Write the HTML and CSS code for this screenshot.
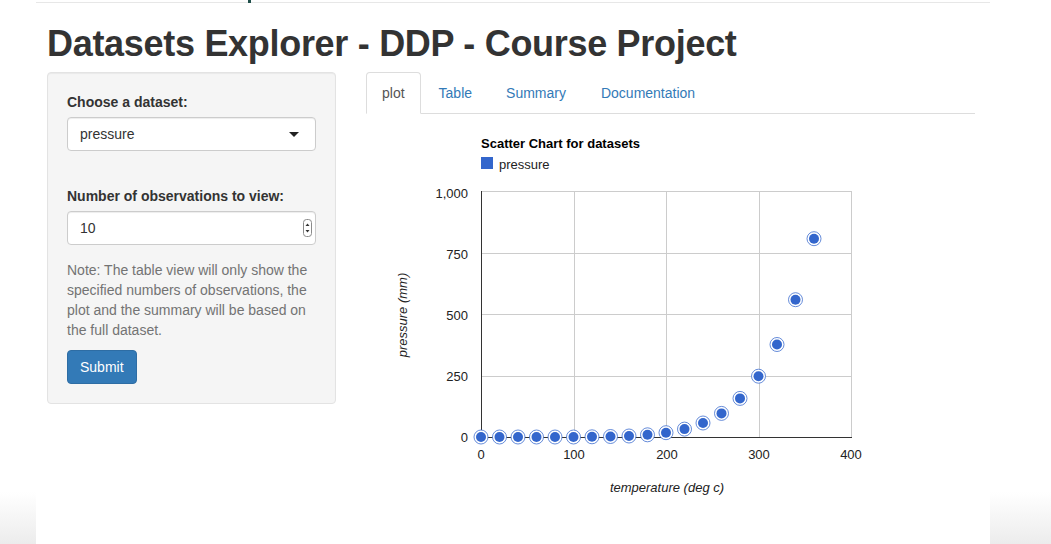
FILE: index.html
```html
<!DOCTYPE html>
<html>
<head>
<meta charset="utf-8">
<title>Datasets Explorer</title>
<link rel="stylesheet" href="styles.css">
</head>
<body>
<div class="page">
  <div class="topbar"><span class="mark"></span></div>
  <h1 class="title">Datasets Explorer - DDP - Course Project</h1>
  <div class="row">
    <aside class="well">
      <div class="group g1">
        <label class="lbl">Choose a dataset:</label>
        <div class="field select"><span>pressure</span><span class="caret"></span></div>
      </div>
      <div class="group g2">
        <label class="lbl">Number of observations to view:</label>
        <div class="field input"><span>10</span>
          <span class="spin"><svg width="9" height="18" viewBox="0 0 9 18"><rect x="0.5" y="0.5" width="8" height="17" rx="3" fill="#fff" stroke="#8a8a8a"/><path d="M2.5 7 L4.5 4.5 L6.5 7 Z" fill="#333"/><path d="M2.5 11 L4.5 13.5 L6.5 11 Z" fill="#333"/></svg></span>
        </div>
      </div>
      <p class="help">Note: The table view will only show the specified numbers of observations, the plot and the summary will be based on the full dataset.</p>
      <button class="btn">Submit</button>
    </aside>
    <main class="main">
      <ul class="tabs">
        <li class="tab active"><a>plot</a></li>
        <li class="tab"><a>Table</a></li>
        <li class="tab"><a>Summary</a></li>
        <li class="tab tab-doc"><a>Documentation</a></li>
      </ul>
      <div class="tab-content">
        <svg class="chart" width="609" height="400" viewBox="366 114 609 400">
          <text class="ctitle" x="481" y="148">Scatter Chart for datasets</text>
          <rect x="481" y="157" width="12" height="12" fill="#3366cc"/>
          <text class="clabel" x="499" y="169">pressure</text>
          <g stroke="#cccccc" stroke-width="1" fill="none">
            <path d="M481 191.5 H851.5"/>
            <path d="M481 253.5 H851.5"/>
            <path d="M481 314.5 H851.5"/>
            <path d="M481 376.5 H851.5"/>
            <path d="M574.5 191 V437"/>
            <path d="M666.5 191 V437"/>
            <path d="M759.5 191 V437"/>
            <path d="M851.5 191 V437"/>
          </g>
          <path d="M481.5 191 V438" stroke="#333" stroke-width="1"/>
          <path d="M481 437.5 H852" stroke="#333" stroke-width="1"/>
          <g class="clabel" text-anchor="end">
            <text x="468" y="198">1,000</text>
            <text x="468" y="259">750</text>
            <text x="468" y="320">500</text>
            <text x="468" y="381">250</text>
            <text x="468" y="442">0</text>
          </g>
          <g class="clabel" text-anchor="middle">
            <text x="481" y="459">0</text>
            <text x="574" y="459">100</text>
            <text x="667" y="459">200</text>
            <text x="759" y="459">300</text>
            <text x="851" y="459">400</text>
          </g>
          <text class="clabel ital" x="667" y="492" text-anchor="middle">temperature (deg c)</text>
          <text class="clabel ital" x="407" y="315" text-anchor="middle" transform="rotate(-90 407 315)">pressure (mm)</text>
          <g class="pts">
            <g transform="translate(481 437)"><circle r="7" class="ring"/><circle r="5" class="dot"/></g>
            <g transform="translate(499.5 437)"><circle r="7" class="ring"/><circle r="5" class="dot"/></g>
            <g transform="translate(518 437)"><circle r="7" class="ring"/><circle r="5" class="dot"/></g>
            <g transform="translate(536.5 437)"><circle r="7" class="ring"/><circle r="5" class="dot"/></g>
            <g transform="translate(555 437)"><circle r="7" class="ring"/><circle r="5" class="dot"/></g>
            <g transform="translate(573.5 437)"><circle r="7" class="ring"/><circle r="5" class="dot"/></g>
            <g transform="translate(592 436.8)"><circle r="7" class="ring"/><circle r="5" class="dot"/></g>
            <g transform="translate(610.5 436.5)"><circle r="7" class="ring"/><circle r="5" class="dot"/></g>
            <g transform="translate(629 436)"><circle r="7" class="ring"/><circle r="5" class="dot"/></g>
            <g transform="translate(647.5 434.8)"><circle r="7" class="ring"/><circle r="5" class="dot"/></g>
            <g transform="translate(666 432.7)"><circle r="7" class="ring"/><circle r="5" class="dot"/></g>
            <g transform="translate(684.5 429.1)"><circle r="7" class="ring"/><circle r="5" class="dot"/></g>
            <g transform="translate(703 423)"><circle r="7" class="ring"/><circle r="5" class="dot"/></g>
            <g transform="translate(721.5 413.4)"><circle r="7" class="ring"/><circle r="5" class="dot"/></g>
            <g transform="translate(740 398.4)"><circle r="7" class="ring"/><circle r="5" class="dot"/></g>
            <g transform="translate(758.5 376.2)"><circle r="7" class="ring"/><circle r="5" class="dot"/></g>
            <g transform="translate(777 344.5)"><circle r="7" class="ring"/><circle r="5" class="dot"/></g>
            <g transform="translate(795.5 299.7)"><circle r="7" class="ring"/><circle r="5" class="dot"/></g>
            <g transform="translate(814 238.7)"><circle r="7" class="ring"/><circle r="5" class="dot"/></g>
          </g>
        </svg>
      </div>
    </main>
  </div>
</div>
</body>
</html>
```

FILE: styles.css
```css
html, body {
  margin: 0;
  padding: 0;
}
body {
  background: linear-gradient(to bottom, #ffffff 0, #ffffff 492px, #ececec 544px);
  min-height: 544px;
  font-family: "Liberation Sans", Arial, Helvetica, sans-serif;
  font-size: 14px;
  line-height: 20px;
  color: #333;
  overflow: hidden;
}
.page {
  margin-left: 36px;
  width: 954px;
  min-height: 544px;
  background: #fff;
}
.topbar {
  height: 2px;
  border-bottom: 1px solid #e7e7e7;
  position: relative;
}
.mark {
  position: absolute;
  left: 212px;
  top: 0;
  width: 3px;
  height: 3px;
  background: #1f4f4a;
}
.title {
  margin: 21px 0 8px 11px;
  font-size: 36px;
  line-height: 40px;
  font-weight: bold;
  letter-spacing: -0.3px;
  color: #333;
}
.row {
  display: flex;
  padding-left: 11px;
  gap: 31px;
  align-items: flex-start;
}
.well {
  width: 289px;
  box-sizing: border-box;
  background: #f5f5f5;
  border: 1px solid #e3e3e3;
  border-radius: 4px;
  padding: 19px;
  box-shadow: inset 0 1px 1px rgba(0,0,0,.05);
}
.lbl {
  display: block;
  font-weight: bold;
  margin-bottom: 5px;
}
.g1 { margin-bottom: 35px; }
.g2 { margin-bottom: 15px; }
.field {
  height: 34px;
  box-sizing: border-box;
  border: 1px solid #ccc;
  border-radius: 4px;
  background: #fff;
  padding: 6px 12px;
  display: flex;
  align-items: center;
  justify-content: space-between;
  color: #333;
  box-shadow: inset 0 1px 1px rgba(0,0,0,.075);
}
.select { padding-right: 16px; }
.caret {
  width: 0;
  height: 0;
  border-left: 5px solid transparent;
  border-right: 5px solid transparent;
  border-top: 5px solid #222;
}
.input { padding-right: 3px; }
.spin { display: flex; }
.help {
  margin: 0;
  color: #737373;
}
.btn {
  margin-top: 10px;
  display: block;
  font-family: inherit;
  font-size: 14px;
  line-height: 20px;
  padding: 6px 12px;
  border: 1px solid #2e6da4;
  background: #337ab7;
  color: #fff;
  border-radius: 4px;
}
.main {
  width: 609px;
  margin-left: -1px;
}
.tabs {
  list-style: none;
  margin: 0;
  padding: 0;
  display: flex;
  border-bottom: 1px solid #ddd;
}
.tab {
  margin-right: 2px;
  margin-bottom: -1px;
}
.tab-doc { margin-left: 1px; }
.tab a {
  display: block;
  padding: 10px 15px;
  border: 1px solid transparent;
  border-radius: 4px 4px 0 0;
  color: #337ab7;
}
.tab.active a {
  border-color: #ddd #ddd transparent #ddd;
  background: #fff;
  color: #555;
}
.chart {
  display: block;
}
.ctitle {
  font-family: "Liberation Sans", Arial, sans-serif;
  font-size: 13px;
  font-weight: bold;
  fill: #000;
}
.clabel {
  font-family: "Liberation Sans", Arial, sans-serif;
  font-size: 13px;
  fill: #222;
}
.ital { font-style: italic; }
.ring {
  fill: #fff;
  stroke: #3366cc;
  stroke-width: 1;
  stroke-opacity: 0.75;
}
.dot { fill: #3366cc; }
```
